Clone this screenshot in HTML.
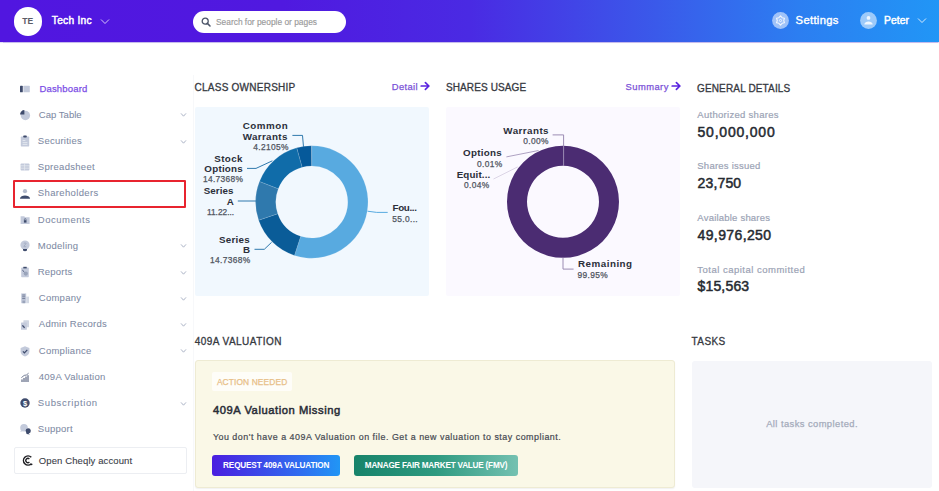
<!DOCTYPE html>
<html><head><meta charset="utf-8"><style>
html,body{margin:0;padding:0;width:939px;height:491px;overflow:hidden;background:#fff;}
body{position:relative;font-family:"Liberation Sans", sans-serif;}
.t{position:absolute;line-height:1;white-space:nowrap;font-family:"Liberation Sans", sans-serif;}
</style></head><body>
<div style="position:absolute;left:0px;top:0px;width:939px;height:41.5px;background:linear-gradient(90deg,#5116e0 0%,#5019e0 30%,#4a2ae3 50%,#3a5aea 70%,#2c7ef1 85%,#2196f6 100%);box-shadow:0 0.5px 1px rgba(90,60,200,0.35);"></div>
<div style="position:absolute;left:13.5px;top:7px;width:28.5px;height:28.5px;background:#fff;border-radius:50%;"></div>
<div class="t" style="left:22.30px;top:17px;font-size:8.6px;font-weight:700;color:#5b5b66;">TE</div>
<div class="t" style="left:51.80px;top:16px;font-size:10.2px;font-weight:400;color:#fff;letter-spacing:0.26px;-webkit-text-stroke:0.45px #fff;">Tech Inc</div>
<svg style="position:absolute;left:100px;top:18px" width="10" height="7" viewBox="0 0 10 7"><path d="M1 1.5 L5 5.5 L9 1.5" fill="none" stroke="rgba(255,255,255,0.75)" stroke-width="1"/></svg>
<div style="position:absolute;left:193px;top:11px;width:153px;height:21.5px;background:#fff;border-radius:11px;"></div>
<svg style="position:absolute;left:201px;top:17px" width="10" height="10" viewBox="0 0 10 10"><circle cx="4.2" cy="4.2" r="3" fill="none" stroke="#4b5468" stroke-width="1.3"/><path d="M6.4 6.4 L9 9" stroke="#4b5468" stroke-width="1.5" stroke-linecap="round"/></svg>
<div class="t" style="left:216.00px;top:18px;font-size:8.4px;font-weight:400;color:#9a9a9a;-webkit-text-stroke:0.15px #9a9a9a;">Search for people or pages</div>
<svg style="position:absolute;left:771.7px;top:11.6px" width="17" height="17" viewBox="0 0 17 17"><circle cx="8.5" cy="8.5" r="8.4" fill="rgba(255,255,255,0.55)"/><polygon points="8.50,3.90 10.10,5.73 12.48,6.20 11.70,8.50 12.48,10.80 10.10,11.27 8.50,13.10 6.90,11.27 4.52,10.80 5.30,8.50 4.52,6.20 6.90,5.73" fill="none" stroke="rgba(255,255,255,0.85)" stroke-width="1.1" stroke-linejoin="round"/><circle cx="8.5" cy="8.5" r="1.1" fill="none" stroke="rgba(255,255,255,0.85)" stroke-width="0.9"/></svg>
<div class="t" style="left:795.60px;top:15px;font-size:11.2px;font-weight:400;color:#fff;letter-spacing:0.34px;-webkit-text-stroke:0.4px #fff;">Settings</div>
<svg style="position:absolute;left:859.7px;top:11.6px" width="17" height="17" viewBox="0 0 17 17"><circle cx="8.5" cy="8.5" r="8.4" fill="rgba(255,255,255,0.55)"/><circle cx="8.5" cy="5.9" r="1.9" fill="rgba(255,255,255,0.85)"/><path d="M4.3 12.6 C4.5 8.4 12.5 8.4 12.7 12.6 Z" fill="rgba(255,255,255,0.85)"/></svg>
<div class="t" style="left:884.00px;top:16px;font-size:10.3px;font-weight:400;color:#fff;letter-spacing:0.1px;-webkit-text-stroke:0.45px #fff;">Peter</div>
<svg style="position:absolute;left:917px;top:17px" width="10" height="7" viewBox="0 0 10 7"><path d="M1 1.5 L5 5.5 L9 1.5" fill="none" stroke="rgba(255,255,255,0.8)" stroke-width="1"/></svg>
<div style="position:absolute;left:192.5px;top:75px;width:1px;height:416px;background:#f7f8fa;"></div>
<div class="t" style="left:39.40px;top:84px;font-size:9.5px;font-weight:400;color:#7c4ee6;letter-spacing:0.18px;-webkit-text-stroke:0.25px #7c4ee6;">Dashboard</div>
<div class="t" style="left:38.80px;top:110px;font-size:9.5px;font-weight:400;color:#7e8aa4;letter-spacing:0.03px;-webkit-text-stroke:0.06px #7e8aa4;">Cap Table</div>
<svg style="position:absolute;left:180px;top:112.30px" width="7" height="6" viewBox="0 0 7 6"><path d="M1 1.4 L3.5 4.2 L6 1.4" fill="none" stroke="#a3acc0" stroke-width="0.9"/></svg>
<div class="t" style="left:37.80px;top:136px;font-size:9.5px;font-weight:400;color:#7e8aa4;letter-spacing:0.25px;-webkit-text-stroke:0.06px #7e8aa4;">Securities</div>
<svg style="position:absolute;left:180px;top:138.50px" width="7" height="6" viewBox="0 0 7 6"><path d="M1 1.4 L3.5 4.2 L6 1.4" fill="none" stroke="#a3acc0" stroke-width="0.9"/></svg>
<div class="t" style="left:37.80px;top:162px;font-size:9.5px;font-weight:400;color:#7e8aa4;letter-spacing:0.3px;-webkit-text-stroke:0.06px #7e8aa4;">Spreadsheet</div>
<div class="t" style="left:37.80px;top:188px;font-size:9.5px;font-weight:400;color:#7e8aa4;letter-spacing:0.36px;-webkit-text-stroke:0.06px #7e8aa4;">Shareholders</div>
<div class="t" style="left:37.80px;top:215px;font-size:9.5px;font-weight:400;color:#7e8aa4;letter-spacing:0.51px;-webkit-text-stroke:0.06px #7e8aa4;">Documents</div>
<div class="t" style="left:37.80px;top:241px;font-size:9.5px;font-weight:400;color:#7e8aa4;letter-spacing:0.25px;-webkit-text-stroke:0.06px #7e8aa4;">Modeling</div>
<svg style="position:absolute;left:180px;top:243.30px" width="7" height="6" viewBox="0 0 7 6"><path d="M1 1.4 L3.5 4.2 L6 1.4" fill="none" stroke="#a3acc0" stroke-width="0.9"/></svg>
<div class="t" style="left:37.80px;top:267px;font-size:9.5px;font-weight:400;color:#7e8aa4;letter-spacing:0.21px;-webkit-text-stroke:0.06px #7e8aa4;">Reports</div>
<svg style="position:absolute;left:180px;top:269.50px" width="7" height="6" viewBox="0 0 7 6"><path d="M1 1.4 L3.5 4.2 L6 1.4" fill="none" stroke="#a3acc0" stroke-width="0.9"/></svg>
<div class="t" style="left:38.80px;top:293px;font-size:9.5px;font-weight:400;color:#7e8aa4;letter-spacing:0.25px;-webkit-text-stroke:0.06px #7e8aa4;">Company</div>
<svg style="position:absolute;left:180px;top:295.70px" width="7" height="6" viewBox="0 0 7 6"><path d="M1 1.4 L3.5 4.2 L6 1.4" fill="none" stroke="#a3acc0" stroke-width="0.9"/></svg>
<div class="t" style="left:38.80px;top:319px;font-size:9.5px;font-weight:400;color:#7e8aa4;letter-spacing:0.25px;-webkit-text-stroke:0.06px #7e8aa4;">Admin Records</div>
<svg style="position:absolute;left:180px;top:321.90px" width="7" height="6" viewBox="0 0 7 6"><path d="M1 1.4 L3.5 4.2 L6 1.4" fill="none" stroke="#a3acc0" stroke-width="0.9"/></svg>
<div class="t" style="left:38.80px;top:346px;font-size:9.5px;font-weight:400;color:#7e8aa4;letter-spacing:0.25px;-webkit-text-stroke:0.06px #7e8aa4;">Compliance</div>
<svg style="position:absolute;left:180px;top:348.10px" width="7" height="6" viewBox="0 0 7 6"><path d="M1 1.4 L3.5 4.2 L6 1.4" fill="none" stroke="#a3acc0" stroke-width="0.9"/></svg>
<div class="t" style="left:38.80px;top:372px;font-size:9.5px;font-weight:400;color:#7e8aa4;letter-spacing:0.25px;-webkit-text-stroke:0.06px #7e8aa4;">409A Valuation</div>
<div class="t" style="left:37.80px;top:398px;font-size:9.5px;font-weight:400;color:#7e8aa4;letter-spacing:0.64px;-webkit-text-stroke:0.06px #7e8aa4;">Subscription</div>
<svg style="position:absolute;left:180px;top:400.50px" width="7" height="6" viewBox="0 0 7 6"><path d="M1 1.4 L3.5 4.2 L6 1.4" fill="none" stroke="#a3acc0" stroke-width="0.9"/></svg>
<div class="t" style="left:37.80px;top:424px;font-size:9.5px;font-weight:400;color:#7e8aa4;letter-spacing:0.25px;-webkit-text-stroke:0.06px #7e8aa4;">Support</div>
<svg style="position:absolute;left:18.9px;top:82.80px" width="12" height="12" viewBox="0 0 12 12"><rect x="1" y="2.7" width="2.8" height="6.6" rx="0.6" fill="#3e4b6c"/><rect x="4.4" y="2.7" width="6.4" height="6.6" rx="0.6" fill="#c3cadb"/></svg>
<svg style="position:absolute;left:18.9px;top:109.00px" width="12" height="12" viewBox="0 0 12 12"><circle cx="6.4" cy="6.5" r="4.7" fill="#c3cadb"/><path d="M5.4 5.5 L5.4 1.1 A4.4 4.4 0 0 0 1 5.5 Z" fill="#3e4b6c"/></svg>
<svg style="position:absolute;left:18.9px;top:135.20px" width="12" height="12" viewBox="0 0 12 12"><rect x="1.8" y="1.6" width="8.4" height="9.8" rx="0.6" fill="#c3cadb"/><rect x="4.2" y="0.6" width="3.6" height="2" rx="0.8" fill="#3e4b6c"/><path d="M3.6 5.5 H6.4 M3.6 7.6 H8.4 M3.6 9.4 H8.4" stroke="#e9ecf2" stroke-width="0.8"/></svg>
<svg style="position:absolute;left:18.9px;top:161.40px" width="12" height="12" viewBox="0 0 12 12"><rect x="1.6" y="2.4" width="8.8" height="7.2" rx="0.8" fill="#c3cadb"/><path d="M1.6 4.8 H10.4 M1.6 7.2 H10.4 M5.6 2.4 V9.6" stroke="#e9ecf2" stroke-width="0.7"/></svg>
<svg style="position:absolute;left:18.9px;top:187.60px" width="12" height="12" viewBox="0 0 12 12"><circle cx="6" cy="3.2" r="2.1" fill="#b4bccc"/><path d="M0.9 10.8 C1.3 6.4 10.7 6.4 11.1 10.8 Z" fill="#3e4b6c"/></svg>
<svg style="position:absolute;left:18.9px;top:213.80px" width="12" height="12" viewBox="0 0 12 12"><path d="M1.6 2.2 H5.2 L6.2 3.2 H10.6 V10 H1.6 Z" fill="#c3cadb"/><rect x="4.9" y="6.2" width="2.6" height="2.4" fill="#3e4b6c"/><path d="M5.4 6.2 V5.4 A0.8 0.8 0 0 1 7 5.4 V6.2" fill="none" stroke="#3e4b6c" stroke-width="0.6"/></svg>
<svg style="position:absolute;left:18.9px;top:240.00px" width="12" height="12" viewBox="0 0 12 12"><circle cx="6" cy="5" r="4.6" fill="#c3cadb"/><path d="M4 9 H8 V10.6 Q6 12 4 10.6 Z" fill="#3e4b6c"/><path d="M4.8 3.4 Q6 2.4 7.2 3.4 L4.8 6.4 Q6 7.4 7.2 6.4" fill="none" stroke="#9aa4ba" stroke-width="0.7"/></svg>
<svg style="position:absolute;left:18.9px;top:266.20px" width="12" height="12" viewBox="0 0 12 12"><rect x="2.2" y="1.6" width="7.6" height="9.6" rx="0.6" fill="#c3cadb"/><rect x="4.3" y="0.8" width="3.4" height="1.6" fill="#3e4b6c"/><circle cx="6.8" cy="7.6" r="2.1" fill="#9aa4ba"/><path d="M3.4 4.2 L5.2 5.8" stroke="#3e4b6c" stroke-width="0.9"/></svg>
<svg style="position:absolute;left:18.9px;top:292.40px" width="12" height="12" viewBox="0 0 12 12"><rect x="2.2" y="1.4" width="5" height="9.8" fill="#c3cadb"/><rect x="7.2" y="4.6" width="2.8" height="6.6" fill="#d3d9e4"/><rect x="3.4" y="8.6" width="2.6" height="2.6" fill="#9aa4ba"/><path d="M3.2 3 H6.2 M3.2 4.8 H6.2 M3.2 6.6 H6.2" stroke="#3e4b6c" stroke-width="0.6"/></svg>
<svg style="position:absolute;left:18.9px;top:318.60px" width="12" height="12" viewBox="0 0 12 12"><rect x="4.4" y="1.2" width="5.6" height="7" rx="0.5" fill="#d0d6e2"/><rect x="2" y="3.4" width="5.8" height="7.4" rx="0.5" fill="#c3cadb"/><path d="M3.4 6.4 L5.6 8.8" stroke="#3e4b6c" stroke-width="1.3"/></svg>
<svg style="position:absolute;left:18.9px;top:344.80px" width="12" height="12" viewBox="0 0 12 12"><path d="M6 1.2 L10.4 3 V6.4 C10.4 9 8.4 10.6 6 11.4 C3.6 10.6 1.6 9 1.6 6.4 V3 Z" fill="#c3cadb"/><path d="M3.9 6.4 L5.4 7.8 L8.3 4.8" fill="none" stroke="#3e4b6c" stroke-width="1.2"/></svg>
<svg style="position:absolute;left:18.9px;top:371.00px" width="12" height="12" viewBox="0 0 12 12"><path d="M3 8.4 V11 M5 7 V11 M7 5.6 V11 M9 4.2 V11" stroke="#3e4b6c" stroke-width="1.0"/><path d="M2.4 6.6 L5.2 4.4 L7.4 4 L9.6 2.2" fill="none" stroke="#3e4b6c" stroke-width="0.7"/></svg>
<svg style="position:absolute;left:18.9px;top:397.20px" width="12" height="12" viewBox="0 0 12 12"><circle cx="6" cy="6" r="4.7" fill="#3e4b6c"/><text x="6" y="8.9" text-anchor="middle" font-family="Liberation Sans" font-weight="700" font-size="7.6" fill="#fff">$</text></svg>
<svg style="position:absolute;left:18.9px;top:423.40px" width="12" height="12" viewBox="0 0 12 12"><circle cx="5" cy="4.8" r="3.8" fill="#c3cadb"/><path d="M2 7.2 L1.4 9 L3.8 8 Z" fill="#c3cadb"/><path d="M6.6 7.8 A2.6 2.6 0 1 1 9.6 10.4 L11 11.4 L7.6 11 Z" fill="#3e4b6c"/></svg>
<svg style="position:absolute;left:22px;top:455px" width="11" height="11" viewBox="0 0 11 11"><path d="M9.3 2.2 A4.6 4.6 0 1 0 9.3 8.8" fill="none" stroke="#1e1e22" stroke-width="1.5"/><path d="M7.4 4 A2.1 2.1 0 1 0 7.4 7" fill="none" stroke="#1e1e22" stroke-width="1.3"/><circle cx="9.6" cy="9.3" r="0.9" fill="#1e1e22"/></svg>
<div style="position:absolute;left:13px;top:180px;width:173px;height:27.8px;border:2px solid #e8242f;border-radius:1px;box-sizing:border-box;"></div>
<div style="position:absolute;left:13.5px;top:447px;width:173.3px;height:26.6px;border:1px solid #eceef2;border-radius:2px;box-sizing:border-box;"></div>
<div class="t" style="left:38.80px;top:456px;font-size:9.5px;font-weight:400;color:#3a3e48;letter-spacing:0.11px;-webkit-text-stroke:0.1px #3a3e48;">Open Cheqly account</div>
<div class="t" style="left:194.60px;top:83px;font-size:10.0px;font-weight:400;color:#36393f;letter-spacing:0.24px;-webkit-text-stroke:0.3px #36393f;">CLASS OWNERSHIP</div>
<div class="t" style="left:391.80px;top:82px;font-size:9.4px;font-weight:400;color:#7a52d8;letter-spacing:0.36px;-webkit-text-stroke:0.25px #7a52d8;">Detail</div>
<svg style="position:absolute;left:419.5px;top:81px" width="11" height="10" viewBox="0 0 11 10"><path d="M1.2 5 L8.8 5 M5.4 1.6 L8.9 5 L5.4 8.4" fill="none" stroke="#5a24e0" stroke-width="1.7" stroke-linecap="round" stroke-linejoin="round"/></svg>
<div style="position:absolute;left:195px;top:107px;width:233.5px;height:189px;background:#f1f8fe;border-radius:2px;"></div>
<div class="t" style="left:445.90px;top:83px;font-size:10.0px;font-weight:400;color:#36393f;letter-spacing:0.12px;-webkit-text-stroke:0.3px #36393f;">SHARES USAGE</div>
<div class="t" style="left:625.60px;top:82px;font-size:9.4px;font-weight:400;color:#7a52d8;letter-spacing:0.44px;-webkit-text-stroke:0.25px #7a52d8;">Summary</div>
<svg style="position:absolute;left:670.5px;top:81px" width="11" height="10" viewBox="0 0 11 10"><path d="M1.2 5 L8.8 5 M5.4 1.6 L8.9 5 L5.4 8.4" fill="none" stroke="#5a24e0" stroke-width="1.7" stroke-linecap="round" stroke-linejoin="round"/></svg>
<div style="position:absolute;left:446px;top:107px;width:234px;height:189px;background:#fbf9ff;border-radius:2px;"></div>
<div class="t" style="left:697.00px;top:84px;font-size:10.0px;font-weight:400;color:#36393f;letter-spacing:0.15px;-webkit-text-stroke:0.3px #36393f;">GENERAL DETAILS</div>
<div class="t" style="left:697.30px;top:110px;font-size:9.5px;font-weight:400;color:#9ba3b5;letter-spacing:0.29px;-webkit-text-stroke:0.2px #9ba3b5;">Authorized shares</div>
<div class="t" style="left:697.50px;top:125px;font-size:14.0px;font-weight:400;color:#262a31;letter-spacing:0.79px;-webkit-text-stroke:0.5px #262a31;">50,000,000</div>
<div class="t" style="left:697.30px;top:161px;font-size:9.5px;font-weight:400;color:#9ba3b5;letter-spacing:0.24px;-webkit-text-stroke:0.2px #9ba3b5;">Shares issued</div>
<div class="t" style="left:697.50px;top:176px;font-size:14.0px;font-weight:400;color:#262a31;letter-spacing:0.16px;-webkit-text-stroke:0.5px #262a31;">23,750</div>
<div class="t" style="left:697.30px;top:213px;font-size:9.5px;font-weight:400;color:#9ba3b5;letter-spacing:0.21px;-webkit-text-stroke:0.2px #9ba3b5;">Available shares</div>
<div class="t" style="left:697.50px;top:228px;font-size:14.0px;font-weight:400;color:#262a31;letter-spacing:0.39px;-webkit-text-stroke:0.5px #262a31;">49,976,250</div>
<div class="t" style="left:697.30px;top:265px;font-size:9.5px;font-weight:400;color:#9ba3b5;letter-spacing:0.49px;-webkit-text-stroke:0.2px #9ba3b5;">Total capital committed</div>
<div class="t" style="left:697.50px;top:279px;font-size:14.0px;font-weight:400;color:#262a31;letter-spacing:0.17px;-webkit-text-stroke:0.5px #262a31;">$15,563</div>
<svg style="position:absolute;left:0;top:0" width="939" height="491" viewBox="0 0 939 491"><path d="M311.80 145.80 A56.2 56.2 0 1 1 294.43 255.45 L300.68 236.24 A36 36 0 1 0 311.80 166.00 Z" fill="#58aae0" stroke="#e8f2fa" stroke-width="0.15"/><path d="M294.43 255.45 A56.2 56.2 0 0 1 258.65 220.25 L277.75 213.69 A36 36 0 0 0 300.68 236.24 Z" fill="#0a5c98" stroke="#e8f2fa" stroke-width="0.15"/><path d="M258.65 220.25 A56.2 56.2 0 0 1 259.50 181.44 L278.30 188.83 A36 36 0 0 0 277.75 213.69 Z" fill="#2f79ad" stroke="#e8f2fa" stroke-width="0.15"/><path d="M259.50 181.44 A56.2 56.2 0 0 1 296.79 147.84 L302.19 167.31 A36 36 0 0 0 278.30 188.83 Z" fill="#106ca9" stroke="#e8f2fa" stroke-width="0.15"/><path d="M296.79 147.84 A56.2 56.2 0 0 1 311.47 145.80 L311.59 166.00 A36 36 0 0 0 302.19 167.31 Z" fill="#05599a" stroke="#e8f2fa" stroke-width="0.15"/><polyline points="292.4,135.4 302.5,135.4 303.5,147" fill="none" stroke="#2f79ad" stroke-width="1"/><polyline points="247,168.4 256,168.4 272.4,160.8" fill="none" stroke="#2f79ad" stroke-width="1"/><polyline points="237.8,201 256,201" fill="none" stroke="#2f79ad" stroke-width="1"/><polyline points="254.5,249.3 264.3,249.3 271.6,242.3" fill="none" stroke="#2f79ad" stroke-width="1"/><polyline points="367.5,211.2 376.7,212.4 387.7,212.4" fill="none" stroke="#58aae0" stroke-width="1"/><path d="M563.00 145.80 A56 56 0 1 1 562.99 145.80 L562.99 165.80 A36 36 0 1 0 563.00 165.80 Z" fill="#4b2c72"/><polyline points="552.6,134.9 563.6,134.9 563.6,166" fill="none" stroke="#9b8cb3" stroke-width="1"/><polyline points="506.4,156.9 538.5,150.5" fill="none" stroke="#9b8cb3" stroke-width="0.8"/><polyline points="493.5,179 517.7,166.9" fill="none" stroke="#d4cce0" stroke-width="0.8"/><polyline points="563,257.8 563,269.1 573.6,269.1" fill="none" stroke="#9b8cb3" stroke-width="1"/></svg>
<div class="t" style="left:242.70px;top:121px;font-size:9.8px;font-weight:700;color:#2b2f3a;letter-spacing:0.52px;">Common</div>
<div class="t" style="left:242.70px;top:132px;font-size:9.8px;font-weight:700;color:#2b2f3a;letter-spacing:0.37px;">Warrants</div>
<div class="t" style="left:253.30px;top:143px;font-size:8.4px;font-weight:400;color:#50555f;letter-spacing:0.35px;-webkit-text-stroke:0.25px #50555f;">4.2105%</div>
<div class="t" style="left:214.30px;top:154px;font-size:9.8px;font-weight:700;color:#2b2f3a;letter-spacing:0.35px;">Stock</div>
<div class="t" style="left:204.30px;top:164px;font-size:9.8px;font-weight:700;color:#2b2f3a;letter-spacing:0.24px;">Options</div>
<div class="t" style="left:202.90px;top:175px;font-size:8.4px;font-weight:400;color:#50555f;letter-spacing:0.35px;-webkit-text-stroke:0.25px #50555f;">14.7368%</div>
<div class="t" style="left:203.70px;top:186px;font-size:9.8px;font-weight:700;color:#2b2f3a;letter-spacing:0.08px;">Series</div>
<div class="t" style="left:226.70px;top:197px;font-size:9.8px;font-weight:700;color:#2b2f3a;">A</div>
<div class="t" style="left:207.00px;top:208px;font-size:8.3px;font-weight:400;color:#50555f;-webkit-text-stroke:0.25px #50555f;">11.22...</div>
<div class="t" style="left:219.10px;top:235px;font-size:9.8px;font-weight:700;color:#2b2f3a;letter-spacing:0.24px;">Series</div>
<div class="t" style="left:243.10px;top:245px;font-size:9.8px;font-weight:700;color:#2b2f3a;">B</div>
<div class="t" style="left:210.10px;top:256px;font-size:8.4px;font-weight:400;color:#50555f;letter-spacing:0.35px;-webkit-text-stroke:0.25px #50555f;">14.7368%</div>
<div class="t" style="left:392.60px;top:203px;font-size:9.8px;font-weight:700;color:#2b2f3a;letter-spacing:-0.36px;">Fou...</div>
<div class="t" style="left:392.30px;top:215px;font-size:8.4px;font-weight:400;color:#50555f;letter-spacing:0.35px;-webkit-text-stroke:0.25px #50555f;">55.0...</div>
<div class="t" style="left:503.30px;top:126px;font-size:9.8px;font-weight:700;color:#2b2f3a;letter-spacing:0.45px;">Warrants</div>
<div class="t" style="left:523.30px;top:137px;font-size:8.4px;font-weight:400;color:#50555f;letter-spacing:0.35px;-webkit-text-stroke:0.25px #50555f;">0.00%</div>
<div class="t" style="left:463.10px;top:148px;font-size:9.8px;font-weight:700;color:#2b2f3a;letter-spacing:0.27px;">Options</div>
<div class="t" style="left:477.10px;top:160px;font-size:8.4px;font-weight:400;color:#50555f;letter-spacing:0.35px;-webkit-text-stroke:0.25px #50555f;">0.01%</div>
<div class="t" style="left:456.70px;top:170px;font-size:9.8px;font-weight:700;color:#2b2f3a;letter-spacing:0.14px;">Equit...</div>
<div class="t" style="left:464.00px;top:181px;font-size:8.4px;font-weight:400;color:#50555f;letter-spacing:0.35px;-webkit-text-stroke:0.25px #50555f;">0.04%</div>
<div class="t" style="left:578.00px;top:259px;font-size:9.8px;font-weight:700;color:#2b2f3a;letter-spacing:0.5px;">Remaining</div>
<div class="t" style="left:577.60px;top:271px;font-size:8.4px;font-weight:400;color:#50555f;letter-spacing:0.35px;-webkit-text-stroke:0.25px #50555f;">99.95%</div>
<div class="t" style="left:194.70px;top:337px;font-size:10.0px;font-weight:400;color:#36393f;letter-spacing:0.46px;-webkit-text-stroke:0.3px #36393f;">409A VALUATION</div>
<div style="position:absolute;left:194.5px;top:360.3px;width:480px;height:127.5px;background:#faf8e7;border:1px solid #eeebd3;box-sizing:border-box;border-radius:3px;box-shadow:0 1px 1.5px rgba(0,0,0,0.06);"></div>
<div style="position:absolute;left:212px;top:372.4px;width:80px;height:18.4px;background:#fefdf8;border-radius:2px;"></div>
<div class="t" style="left:216.90px;top:378px;font-size:8.4px;font-weight:400;color:#e8c088;letter-spacing:0.12px;-webkit-text-stroke:0.25px #e8c088;">ACTION NEEDED</div>
<div class="t" style="left:213.00px;top:405px;font-size:11.2px;font-weight:400;color:#2a2e38;letter-spacing:0.56px;-webkit-text-stroke:0.5px #2a2e38;">409A Valuation Missing</div>
<div class="t" style="left:212.90px;top:433px;font-size:8.9px;font-weight:400;color:#464a52;letter-spacing:0.51px;-webkit-text-stroke:0.2px #464a52;">You don't have a 409A Valuation on file. Get a new valuation to stay compliant.</div>
<div style="position:absolute;left:212px;top:455px;width:127.5px;height:21px;background:linear-gradient(90deg,#4a1ee0,#2f6ef0 70%,#2196f5);border-radius:3px;"></div>
<div class="t" style="left:223.10px;top:462px;font-size:8.2px;font-weight:700;color:#fff;letter-spacing:-0.17px;">REQUEST 409A VALUATION</div>
<div style="position:absolute;left:354px;top:455.3px;width:163.6px;height:20.3px;background:linear-gradient(90deg,#17836a,#2e9a80 50%,#74c1b1);border-radius:3px;"></div>
<div class="t" style="left:364.80px;top:462px;font-size:8.2px;font-weight:700;color:#fff;letter-spacing:-0.22px;">MANAGE FAIR MARKET VALUE (FMV)</div>
<div class="t" style="left:691.60px;top:337px;font-size:10.0px;font-weight:400;color:#36393f;letter-spacing:0.4px;-webkit-text-stroke:0.3px #36393f;">TASKS</div>
<div style="position:absolute;left:692px;top:360.5px;width:240px;height:127.3px;background:#f5f6fa;border-radius:3px;"></div>
<div class="t" style="left:766.20px;top:419px;font-size:9.4px;font-weight:400;color:#a4abba;letter-spacing:0.42px;-webkit-text-stroke:0.25px #a4abba;">All tasks completed.</div>
</body></html>
